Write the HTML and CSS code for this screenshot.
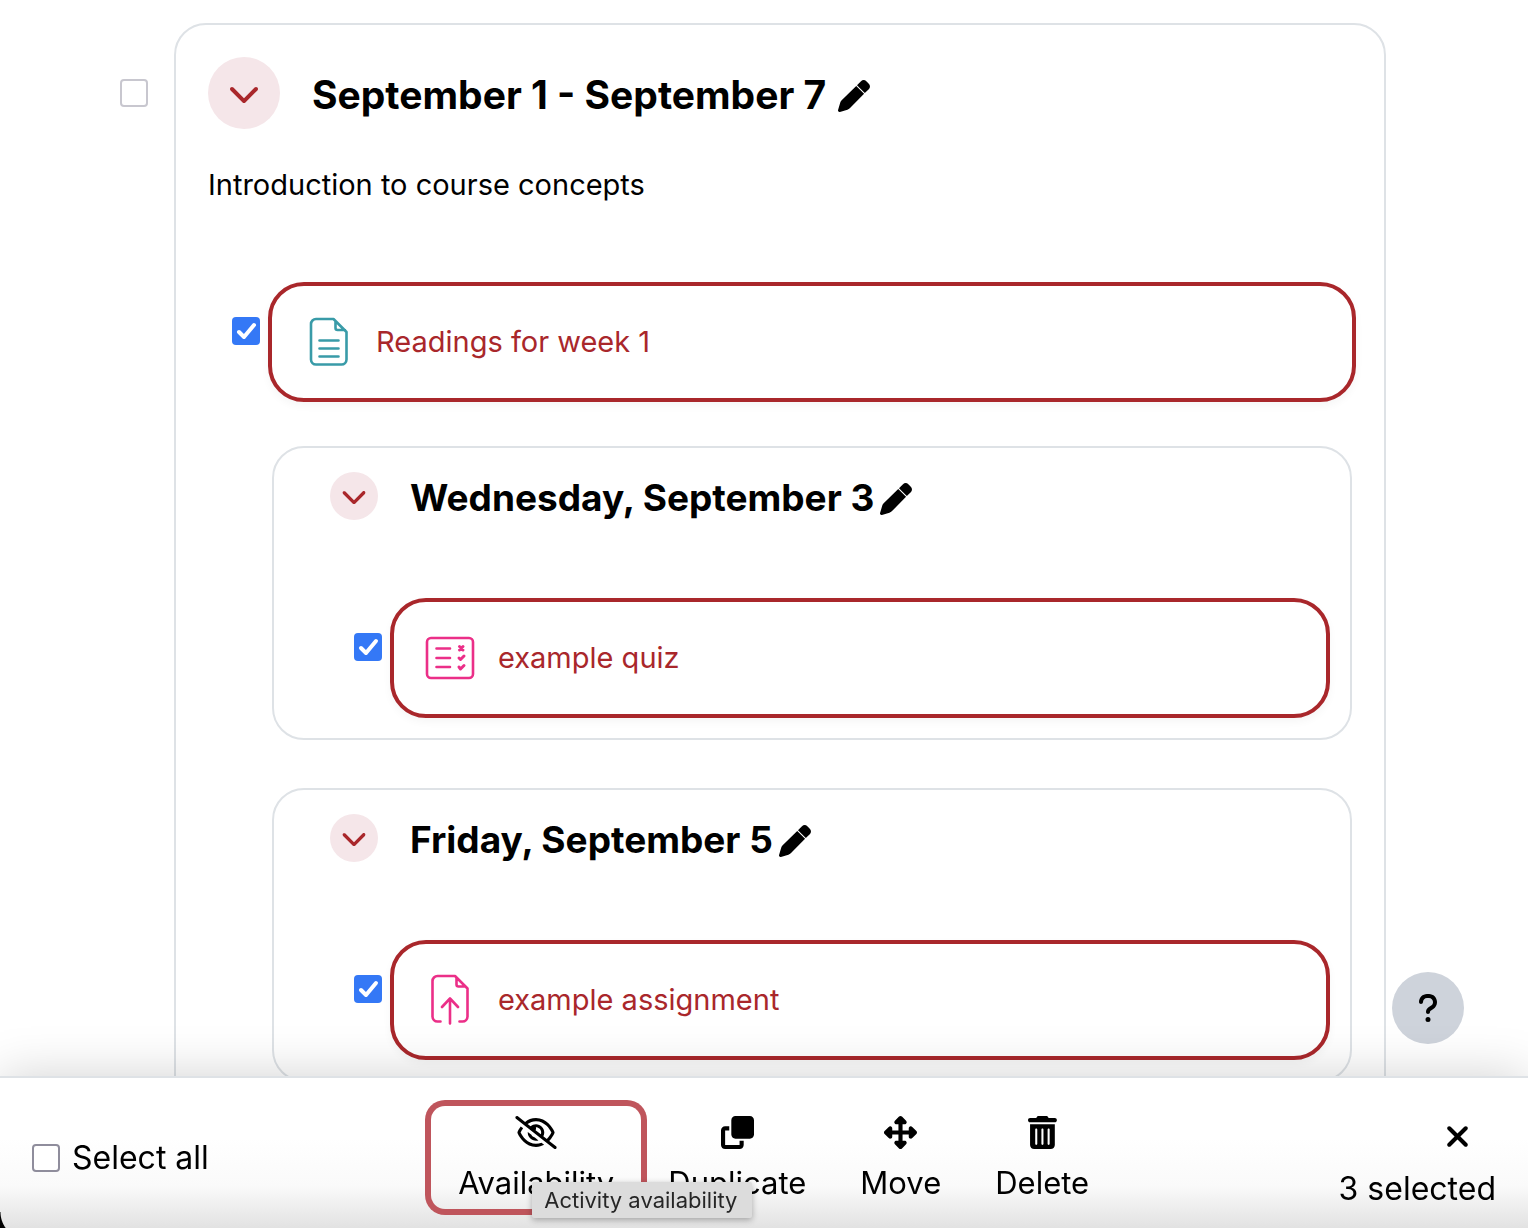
FILE: index.html
```html
<!DOCTYPE html>
<html lang="en">
<head>
<meta charset="utf-8">
<meta name="viewport" content="width=device-width, initial-scale=1">
<title>Course: bulk edit</title>
<link rel="stylesheet" href="styles.css">
</head>
<body>
<svg class="sprite" aria-hidden="true">
  <symbol id="chevron" viewBox="0 0 512 512"><path d="M233.4 406.6c12.5 12.5 32.8 12.5 45.3 0l192-192c12.5-12.5 12.5-32.8 0-45.3s-32.8-12.5-45.3 0L256 338.7 86.6 169.4c-12.5-12.5-32.8-12.5-45.3 0s-12.5 32.8 0 45.3l192 192z"/></symbol>
  <symbol id="pen" viewBox="0 0 512 512"><path d="M368 19.300L304 83 429 208l63.700-58.700c25-25 25-65.500 0-90.500L453.300 19.300c-25-25-60-25-85.300 0zM291.700 95L58.600 323.500c-10.400 10.400-18 23.300-22.200 37.400L1 481.200C-1.500 489.700 .8 498.800 7 505s15.300 8.500 23.700 6.100l120.300-35.400c14.100-4.200 27-11.800 37.400-22.200L417 220.300z"/></symbol>
</svg>

<main class="course">
  <section class="week">
    <input type="checkbox" class="check week-check" aria-label="Select section September 1 - September 7">
    <div class="week-card">
      <header class="heading">
        <button class="toggle toggle-large" aria-label="Collapse"><svg><use href="#chevron"/></svg></button>
        <h2 class="title title-large">September 1 - September 7</h2>
        <button class="edit" aria-label="Edit section name"><svg><use href="#pen"/></svg></button>
      </header>
      <p class="summary">Introduction to course concepts</p>

      <div class="contents">
        <div class="activity">
          <input type="checkbox" class="check" checked aria-label="Select activity Readings for week 1">
          <div class="activity-card">
            <svg class="activity-icon page" viewBox="0 0 48 48">
              <path d="M12 1H29.500L42.500 14V41.500a5 5 0 0 1-5 5H12a5 5 0 0 1-5-5V6a5 5 0 0 1 5-5zM31.500 3V10a2 2 0 0 0 2 2H41M15.500 22.500H34.500M15.500 30.500H34.500M15.500 38.500H34.500"/>
            </svg>
            <a class="activity-link" href="#readings">Readings for week 1</a>
          </div>
        </div>

        <section class="day">
          <header class="heading">
            <button class="toggle" aria-label="Collapse"><svg><use href="#chevron"/></svg></button>
            <h3 class="title">Wednesday, September 3</h3>
            <button class="edit" aria-label="Edit section name"><svg><use href="#pen"/></svg></button>
          </header>
          <div class="activity">
            <input type="checkbox" class="check" checked aria-label="Select activity example quiz">
            <div class="activity-card">
              <svg class="activity-icon assess" viewBox="0 0 48 48">
                <rect x="1" y="4" width="46" height="40" rx="4"/>
                <path d="M10.500 14.500H24M10.500 24H24M10.500 33H24"/>
                <path class="marks" d="M33.500 12.500L37 16M37 12.500L33.500 16M33 24L34.500 25.500L38 22M33 33L34.500 35L38 31.500"/>
              </svg>
              <a class="activity-link" href="#quiz">example quiz</a>
            </div>
          </div>
        </section>

        <section class="day">
          <header class="heading">
            <button class="toggle" aria-label="Collapse"><svg><use href="#chevron"/></svg></button>
            <h3 class="title">Friday, September 5</h3>
            <button class="edit" aria-label="Edit section name"><svg><use href="#pen"/></svg></button>
          </header>
          <div class="activity">
            <input type="checkbox" class="check" checked aria-label="Select activity example assignment">
            <div class="activity-card">
              <svg class="activity-icon assess" viewBox="0 0 48 48">
                <path d="M14.500 45.500H11.500a5 5 0 0 1-5-5V5a5 5 0 0 1 5-5H29L41.500 12.500V40.500a5 5 0 0 1-5 5H33.500M30.500 2V8.500a2 2 0 0 0 2 2H39M24 47.500V22.500M16 31L24 22.500L32 31"/>
              </svg>
              <a class="activity-link" href="#assignment">example assignment</a>
            </div>
          </div>
        </section>
      </div>
    </div>
  </section>
  <button class="help" aria-label="Help"><svg viewBox="0 0 320 512"><path d="M80 160c0-35.3 28.7-64 64-64l32 0c35.3 0 64 28.7 64 64l0 3.6c0 21.8-11.1 42.1-29.4 53.8l-42.2 27.1c-25.2 16.2-40.4 44.1-40.4 74l0 1.4c0 17.7 14.3 32 32 32s32-14.3 32-32l0-1.4c0-8.2 4.2-15.8 11-20.2l42.2-27.1c36.6-23.6 58.8-64.1 58.8-107.7l0-3.6c0-70.7-57.3-128-128-128l-32 0C73.3 32 16 89.3 16 160c0 17.7 14.3 32 32 32s32-14.3 32-32zm80 320a40 40 0 1 0 0-80 40 40 0 1 0 0 80z"/></svg></button>
</main>

<footer class="bulk">
  <label class="select-all"><input type="checkbox" class="check check-dark">Select all</label>
  <div class="actions">
    <button class="action action-focus">
      <svg class="wide" viewBox="0 0 640 512"><path d="M38.800 5.100C28.400-3.100 13.300-1.200 5.100 9.200S-1.200 34.700 9.200 42.900l592 464c10.400 8.200 25.500 6.300 33.700-4.100s6.300-25.500-4.100-33.700L525.600 386.700c39.600-40.600 66.400-86.100 79.900-118.400c3.300-7.900 3.300-16.700 0-24.600c-14.900-35.700-46.200-87.700-93-131.100C465.500 68.800 400.800 32 320 32c-68.200 0-125 26.300-169.300 60.800L38.800 5.100zm151 118.300C226 97.700 269.500 80 320 80c65.200 0 118.800 29.600 159.900 67.700C518.400 183.500 545 226 558.600 256c-12.600 28-36.600 66.800-70.900 100.900l-53.800-42.200c9.100-17.600 14.200-37.500 14.200-58.700c0-70.700-57.300-128-128-128c-32.200 0-61.700 11.900-84.200 31.500l-46.100-36.100zM394.900 284.200l-81.500-63.900c4.200-8.500 6.600-18.200 6.600-28.300c0-5.500-.7-10.900-2-16c.7 0 1.300 0 2 0c44.200 0 80 35.800 80 80c0 9.900-1.800 19.400-5.100 28.200zm9.400 130.300C378.800 425.400 350.700 432 320 432c-65.200 0-118.800-29.600-159.900-67.700C121.600 328.500 95 286 81.400 256c8.300-18.400 21.500-41.500 39.400-64.800L83.100 161.500C60.300 191.200 44 220.800 34.500 243.700c-3.300 7.900-3.300 16.700 0 24.600c14.900 35.700 46.200 87.700 93 131.100C174.500 443.200 239.200 480 320 480c47.800 0 89.900-12.900 126.200-32.500l-41.900-33zM192 256c0 70.700 57.300 128 128 128c13.300 0 26.100-2 38.200-5.800L302 334c-23.500-5.400-43.100-21.200-53.700-42.300l-56.100-44.200c-.2 2.800-.3 5.600-.3 8.500z"/></svg>
      Availability
      <span class="tooltip" role="tooltip">Activity availability</span>
    </button>
    <button class="action">
      <svg viewBox="0 0 512 512"><path d="M288 448L64 448l0-224 64 0 0-64-64 0c-35.300 0-64 28.700-64 64L0 448c0 35.300 28.700 64 64 64l224 0c35.300 0 64-28.700 64-64l0-64-64 0 0 64zm-64-96l224 0c35.300 0 64-28.700 64-64l0-224c0-35.300-28.700-64-64-64L224 0c-35.300 0-64 28.700-64 64l0 224c0 35.300 28.700 64 64 64z"/></svg>
      Duplicate
    </button>
    <button class="action">
      <svg viewBox="0 0 512 512"><path d="M278.600 9.400c-12.500-12.500-32.800-12.500-45.300 0l-64 64c-9.200 9.200-11.900 22.900-6.900 34.900s16.600 19.800 29.600 19.800l32 0 0 96-96 0 0-32c0-12.900-7.800-24.600-19.800-29.600s-25.700-2.200-34.900 6.900l-64 64c-12.500 12.500-12.500 32.800 0 45.300l64 64c9.200 9.200 22.900 11.900 34.900 6.900s19.800-16.600 19.800-29.600l0-32 96 0 0 96-32 0c-12.900 0-24.600 7.800-29.600 19.800s-2.200 25.700 6.900 34.900l64 64c12.500 12.500 32.800 12.500 45.300 0l64-64c9.200-9.200 11.900-22.900 6.900-34.900s-16.600-19.800-29.600-19.800l-32 0 0-96 96 0 0 32c0 12.900 7.800 24.600 19.800 29.600s25.700 2.200 34.900-6.900l64-64c12.500-12.500 12.500-32.800 0-45.300l-64-64c-9.200-9.200-22.900-11.900-34.900-6.900s-19.800 16.600-19.800 29.600l0 32-96 0 0-96 32 0c12.900 0 24.600-7.800 29.600-19.800s2.200-25.700-6.900-34.900l-64-64z"/></svg>
      Move
    </button>
    <button class="action">
      <svg viewBox="0 0 448 512"><path d="M135.200 17.700C140.600 6.800 151.700 0 163.800 0L284.200 0c12.100 0 23.200 6.800 28.600 17.700L320 32l96 0c17.700 0 32 14.300 32 32s-14.300 32-32 32L32 96C14.300 96 0 81.700 0 64S14.300 32 32 32l96 0 7.200-14.300zM32 128l384 0 0 320c0 35.300-28.700 64-64 64L96 512c-35.300 0-64-28.700-64-64l0-320zm96 64c-8.800 0-16 7.200-16 16l0 224c0 8.800 7.200 16 16 16s16-7.200 16-16l0-224c0-8.800-7.200-16-16-16zm96 0c-8.800 0-16 7.200-16 16l0 224c0 8.800 7.200 16 16 16s16-7.200 16-16l0-224c0-8.800-7.200-16-16-16zm96 0c-8.800 0-16 7.200-16 16l0 224c0 8.800 7.200 16 16 16s16-7.200 16-16l0-224c0-8.800-7.200-16-16-16z"/></svg>
      Delete
    </button>
  </div>
  <div class="status">
    <button class="close" aria-label="Close bulk actions"><svg viewBox="0 0 384 512"><path d="M342.600 150.600c12.500-12.500 12.500-32.800 0-45.300s-32.800-12.500-45.300 0L192 210.700 86.600 105.400c-12.500-12.500-32.800-12.500-45.300 0s-12.500 32.800 0 45.300L146.700 256 41.400 361.400c-12.500 12.500-12.500 32.800 0 45.300s32.800 12.500 45.300 0L192 301.300 297.400 406.600c12.500 12.500 32.800 12.500 45.300 0s12.500-32.800 0-45.300L237.300 256 342.600 150.600z"/></svg></button>
    <span>3 selected</span>
  </div>
</footer>
</body>
</html>
```
FILE: styles.css
```css
:root {
  --red: #a9272b;
  --line: #dee2e6;
  --teal: #399ba8;
  --pink: #eb2f88;
}

* {
  box-sizing: border-box;
}

body {
  display: flex;
  flex-direction: column;
  height: 100vh;
  margin: 0;
  color: #000;
  background: #fff;
  font: 29px/40px Inter, "Liberation Sans", sans-serif;
}

button {
  padding: 0;
  border: 0;
  background: none;
  color: inherit;
  font: inherit;
}

svg {
  display: block;
  fill: currentColor;
}

h2,
h3,
p {
  margin: 0;
}

.sprite {
  position: absolute;
  width: 0;
  height: 0;
}

.course {
  flex: 1;
  min-height: 0;
  overflow-y: auto;
  scrollbar-width: none;
  padding: 23px 142px 0 120px;
}

.week {
  display: flex;
  align-items: flex-start;
  gap: 26px;
}

.week-card {
  flex: 1;
  padding: 32px 32px 64px;
  border: 2px solid var(--line);
  border-radius: 32px;
}

.check {
  appearance: none;
  flex: none;
  width: 28px;
  height: 28px;
  margin: 0;
  border: 2px solid #c8c7cf;
  border-radius: 4px;
  background: #fff;
}

.check-dark {
  border-color: #8f8d9c;
}

.check:checked {
  border: 0;
  background: #3478f6 url("data:image/svg+xml,%3Csvg xmlns='http://www.w3.org/2000/svg' viewBox='0 0 28 28' fill='none' stroke='white' stroke-width='4' stroke-linecap='round' stroke-linejoin='round'%3E%3Cpath d='M7 15L12 20L22 8'/%3E%3C/svg%3E");
}

.week-check {
  margin-top: 56px;
}

.heading {
  display: flex;
  align-items: center;
}

.toggle {
  display: grid;
  place-items: center;
  width: 48px;
  height: 48px;
  border-radius: 50%;
  color: var(--red);
  background: #f5e6e9;
}

.toggle svg {
  width: 26px;
  height: 26px;
}

.toggle-large {
  width: 72px;
  height: 72px;
}

.toggle-large svg {
  width: 32px;
  height: 32px;
}

.title {
  margin: 4px 6px 0 32px;
  font-size: 37px;
  line-height: 44px;
  font-weight: 700;
}

.title-large {
  margin-right: 12px;
  font-size: 39px;
}

.edit {
  margin-top: 6px;
}

.edit svg {
  width: 32px;
  height: 32px;
}

.summary {
  margin-top: 36px;
}

.contents {
  display: flex;
  flex-direction: column;
  margin-top: 77px;
}

.activity {
  display: flex;
  align-items: flex-start;
  gap: 8px;
}

.activity .check {
  margin-top: 35px;
}

.contents > .activity {
  margin: 0 -4px 44px 24px;
}

.activity-card {
  flex: 1;
  display: flex;
  align-items: center;
  gap: 24px;
  height: 120px;
  padding: 0 32px;
  border: 4px solid var(--red);
  border-radius: 36px;
  box-shadow: 0 4px 8px rgba(0, 0, 0, 0.04);
}

.activity-icon {
  width: 48px;
  height: 48px;
  overflow: visible;
  fill: none;
  stroke: currentColor;
  stroke-width: 2.6;
  stroke-linecap: round;
  stroke-linejoin: round;
}

.marks {
  stroke-width: 3;
}

.page {
  color: var(--teal);
}

.assess {
  color: var(--pink);
}

.activity-link {
  color: var(--red);
  text-decoration: none;
}

.day {
  margin-left: 64px;
  padding: 24px 20px 20px;
  border: 2px solid var(--line);
  border-radius: 32px;
}

.day + .day {
  margin-top: 48px;
}

.day .heading {
  padding-left: 36px;
  margin-bottom: 78px;
}

.day .activity {
  margin-left: 60px;
}

.help {
  position: fixed;
  right: 64px;
  bottom: 184px;
  display: grid;
  place-items: center;
  width: 72px;
  height: 72px;
  border-radius: 50%;
  background: #ced3db;
}

.help svg {
  width: 20px;
  height: 32px;
}

.bulk {
  position: relative;
  display: flex;
  justify-content: space-between;
  align-items: center;
  padding: 28px 32px 19px;
  border-top: 2px solid var(--line);
  background: linear-gradient(#fff 40%, #fafafa 72%, #e2e2e2);
  box-shadow: 0 0 48px rgba(0, 0, 0, 0.18);
  font-size: 32px;
}

/* rounded corner of the window frame */
.bulk::after {
  content: "";
  position: absolute;
  left: 0;
  bottom: 0;
  width: 28px;
  height: 16px;
  background: radial-gradient(circle at 100% 0, transparent 27px, #000 28px);
}

.select-all {
  display: flex;
  align-items: center;
  gap: 12px;
}

.actions {
  display: flex;
}

.action {
  position: relative;
  display: flex;
  flex-direction: column;
  align-items: center;
  gap: 14px;
  padding: 10px 27px 6px;
  border-radius: 14px;
  font-size: 31px;
}

.action svg {
  height: 33px;
}

.action-focus {
  box-shadow: 0 0 0 6px #bf555c;
}

.action .wide {
  width: 42px;
}

.tooltip {
  position: absolute;
  z-index: 1;
  top: 76px;
  left: 101px;
  padding: 0 15px 0 12px;
  border-radius: 2px;
  background: #dcdcdc;
  box-shadow: 0 2px 6px rgba(0, 0, 0, 0.3);
  color: #262626;
  font-size: 22px;
  line-height: 36px;
  white-space: nowrap;
}

.status {
  align-self: flex-end;
  display: flex;
  flex-direction: column;
  align-items: flex-end;
  gap: 16px;
}

.close {
  margin-right: 26px;
}

.close svg {
  width: 25px;
  height: 33px;
}
```
